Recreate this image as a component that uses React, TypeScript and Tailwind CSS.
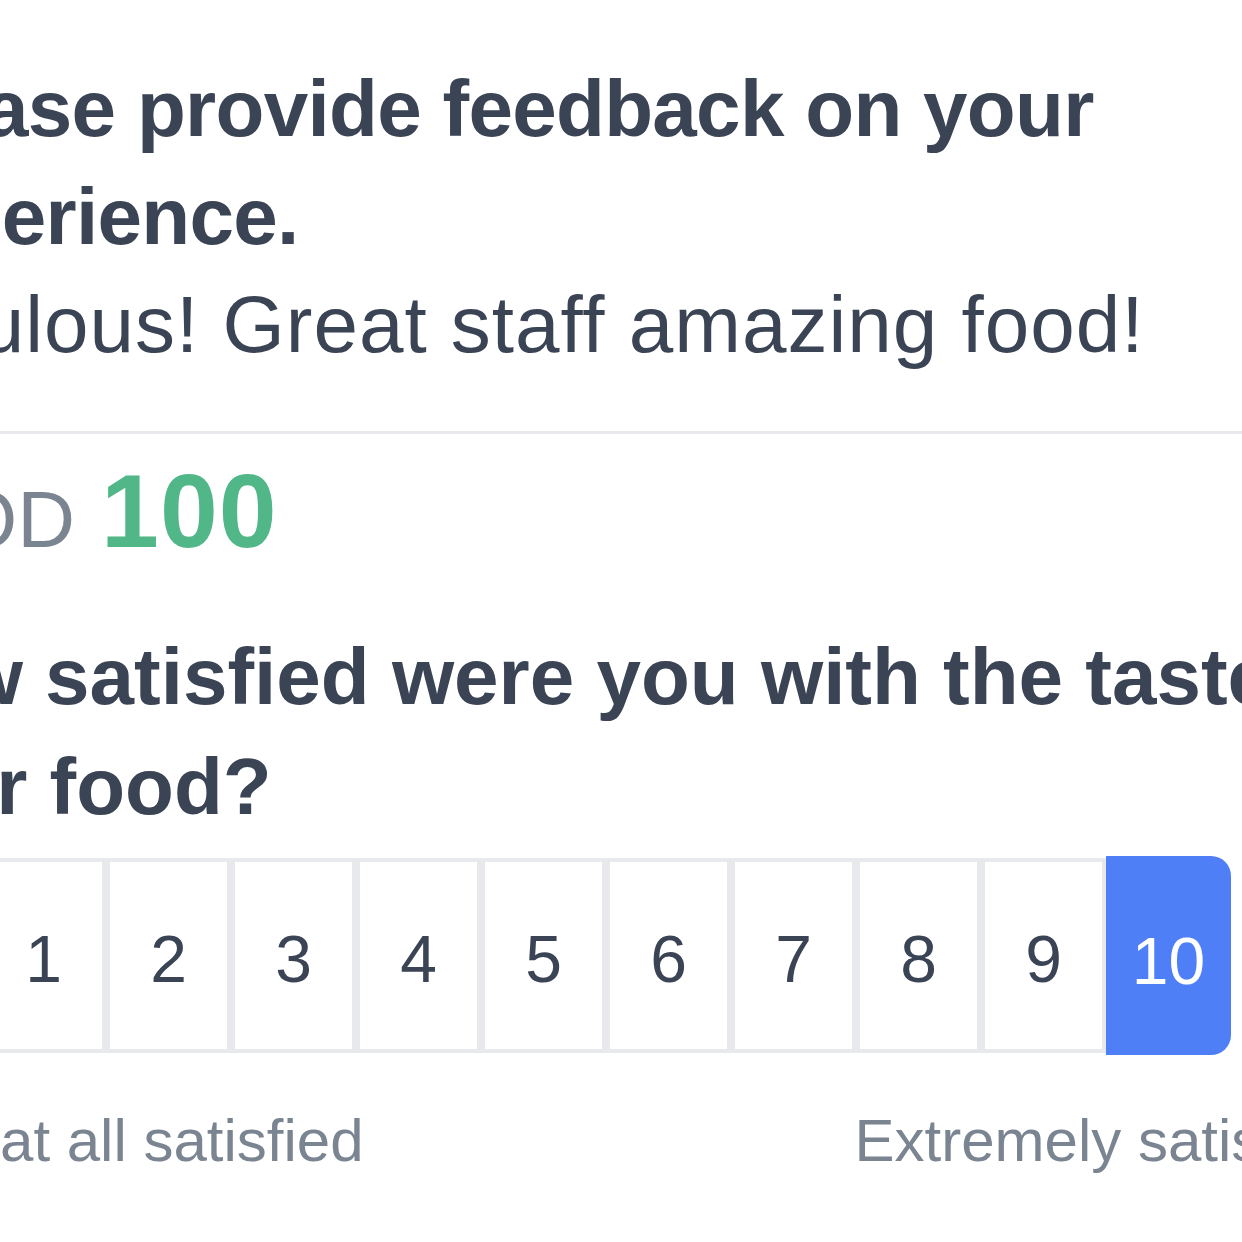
import React from 'react'

const scale = [0, 1, 2, 3, 4, 5, 6, 7, 8, 9, 10]

function App() {
  const selected = 10

  return (
    <div className="w-[1242px] h-[1242px] overflow-hidden bg-white">
      <div className="ml-[-126px] w-[1485px] pt-[55px] font-['Liberation_Sans',Arial,sans-serif] text-[#3a4454]">
        {/* Feedback answer */}
        <h1 className="ml-[-8px] text-[80px] leading-[108px] font-bold tracking-[-0.7px]">
          <span className="block whitespace-nowrap">Please provide feedback on your</span>
          <span className="block whitespace-nowrap">experience.</span>
        </h1>
        <p className="ml-[-35px] text-[80px] leading-[108px] tracking-[1px] whitespace-nowrap">Fabulous! Great staff amazing food!</p>

        <div className="mt-[52px] h-[3px] bg-[#e7e9ed]" />

        {/* Score */}
        <div className="mt-[25px] ml-[-30px] flex h-[104px] items-baseline gap-[26px] leading-none">
          <span className="text-[80px] text-[#7b8592]">FOOD</span>
          <span className="text-[104px] font-bold tracking-[1px] text-[#52b788]">100</span>
        </div>

        {/* Question */}
        <h2 className="mt-[59px] ml-[-20px] text-[80px] leading-[110px] font-bold">
          <span className="block whitespace-nowrap">How satisfied were you with the taste of</span>
          <span className="block whitespace-nowrap">your food?</span>
        </h2>

        {/* Scale */}
        <div className="mt-[14px] ml-[-18px] flex w-[1375px] h-[199px]">
          {scale.map((n) => (
            <div
              key={n}
              className={
                n === selected
                  ? 'w-[125px] shrink-0 flex items-center justify-center pt-[12px] bg-[#4f7ff7] text-white text-[66px] rounded-r-[20px]'
                  : 'w-[125px] shrink-0 flex items-center justify-center pt-[8px] my-[2px] border-4 border-[#e7e9ed] bg-white text-[66px]'
              }
            >
              {n}
            </div>
          ))}
        </div>

        <div className="mt-[56px] flex justify-between pl-[16px] pr-[1px] text-[60px] leading-none text-[#7b8592]">
          <span>Not at all satisfied</span>
          <span>Extremely satisfied</span>
        </div>
      </div>
    </div>
  )
}

export default App
